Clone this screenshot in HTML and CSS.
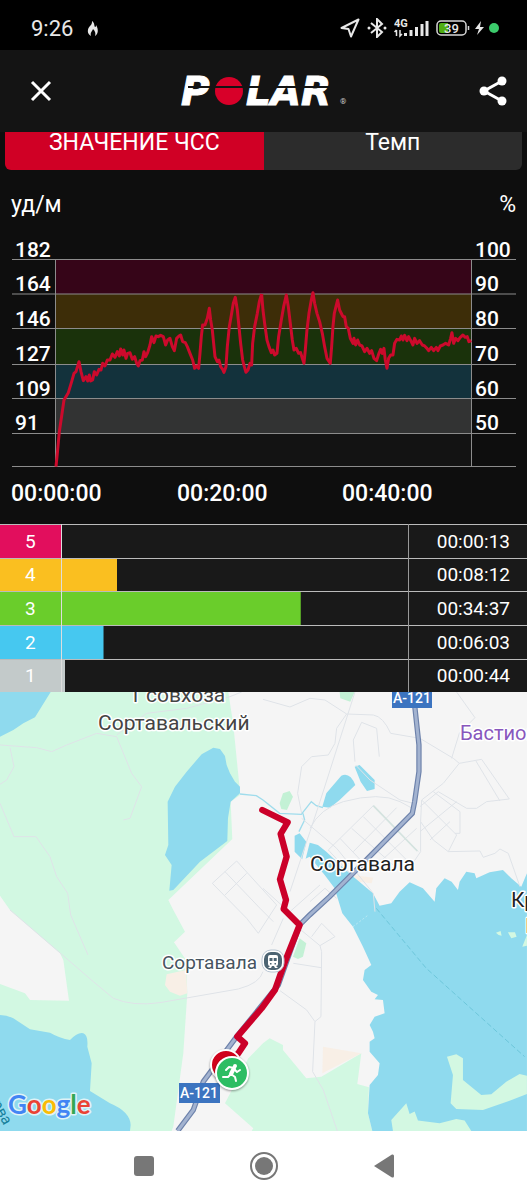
FILE: index.html
```
<!DOCTYPE html>
<html lang="ru">
<head>
    <meta charset="UTF-8">
    <meta name="viewport" content="width=device-width, initial-scale=1.0">
    <title>Polar</title>
    <link rel="stylesheet" href="styles.css">
</head>
<body>
    <div class="statusBar">
        <span class="clock">9:26</span>
        <svg class="flame" width="12" height="17" viewBox="0 0 12 17"><path d="M5 1C8 3 7 6 8 7C9 7 9 6 9 5C12 10 11 14 8 16C9 13 8 11 6 9C5 12 3 12 4 16C0 14 0 9 3 6C5 4 5 3 5 1Z" fill="#e8e8e8"/></svg>
        <div class="statusIcons">
            <svg width="20" height="20" viewBox="0 0 20 20"><path d="M1.500 10L18.500 1.500L11 18.500L8.500 11Z" fill="none" stroke="#e8e8e8" stroke-width="2" stroke-linejoin="round"/></svg>
            <svg width="20" height="20" viewBox="0 0 20 20"><path d="M4 5L15 14L10 19V1L15 6L4 15" fill="none" stroke="#e8e8e8" stroke-width="2"/><circle cx="2" cy="10" r="1.500" fill="#e8e8e8"/><circle cx="18" cy="10" r="1.500" fill="#e8e8e8"/></svg>
            <svg width="35" height="20" viewBox="0 0 35 20">
                <text x="0" y="9" class="netText">4G</text>
                <path d="M2.500 18V12M0.500 14L2.500 12M6 12V18L8 16" stroke="#e8e8e8" stroke-width="1.500" fill="none"/>
                <path d="M11.500 18V15M17 18V12M22.500 18V9M28 18V6M33 18V3" stroke="#e8e8e8" stroke-width="3"/>
            </svg>
            <svg width="34" height="18" viewBox="0 0 34 18">
                <rect x="1" y="2" width="29" height="14" rx="4" fill="none" stroke="#d8d8d8" stroke-width="1.500"/>
                <path d="M5 4H12V14H5Q3 14 3 12V6Q3 4 5 4Z" fill="#4fae12"/>
                <path d="M32.500 7V11" stroke="#d8d8d8" stroke-width="1.500"/>
                <text x="8" y="14" class="batteryText">39</text>
            </svg>
            <svg width="9" height="14" viewBox="0 0 9 14"><path d="M6 0L0 8H4L2 14L9 6H5Z" fill="#e8e8e8"/></svg>
            <svg width="10" height="10" viewBox="0 0 10 10"><circle cx="5" cy="5" r="5" fill="#3ccb6c"/></svg>
        </div>
    </div>

    <header class="header">
        <button class="iconBtn" aria-label="Закрыть">
            <svg width="22" height="22" viewBox="0 0 22 22"><path d="M2 2L20 20M20 2L2 20" stroke="#fff" stroke-width="3"/></svg>
        </button>
        <svg class="logo" width="168" height="32" viewBox="0 0 168 32">
            <text x="1" y="30" class="logoText">P</text>
            <circle cx="49" cy="16" r="14" fill="#d80029"/>
            <text x="66" y="30" class="logoText">LAR</text>
            <path d="M8 12H160" stroke="#141414" stroke-width="2"/>
            <text x="160" y="29" class="regMark">®</text>
        </svg>
        <button class="iconBtn share" aria-label="Поделиться">
            <svg width="28" height="30" viewBox="0 0 28 30"><path d="M23 5L5 15L23 25" fill="none" stroke="#fff" stroke-width="3"/><circle cx="23" cy="5" r="4.500" fill="#fff"/><circle cx="5" cy="15" r="4.500" fill="#fff"/><circle cx="23" cy="25" r="4.500" fill="#fff"/></svg>
        </button>
    </header>

    <main>
        <div class="tabs">
            <button class="tab active">ЗНАЧЕНИЕ ЧСС</button>
            <button class="tab">Темп</button>
        </div>

        <div class="units">
            <span>уд/м</span>
            <span>%</span>
        </div>

        <svg class="chart" viewBox="0 230 527 294">
            <!-- heart rate zones -->
            <rect x="56" y="260" width="415" height="34" fill="#360518"/>
            <rect x="56" y="294" width="415" height="35" fill="#3d2d08"/>
            <rect x="56" y="329" width="415" height="35" fill="#1a320b"/>
            <rect x="56" y="364" width="415" height="35" fill="#13323c"/>
            <rect x="56" y="399" width="415" height="34" fill="#323333"/>
            <rect x="56" y="433" width="415" height="33" fill="#131313"/>
            <path class="gridLine" d="M12 259.500H516M12 294H516M12 328.500H516M12 364.500H516M12 398.500H516M12 433.500H516M12 466.500H516M55.500 260V466M471.500 260V466"/>
            <g transform="translate(0 310) scale(.3333)" class="curve">
                <polyline points="168,470 172,430 178,365 184,325 192,270 205,248 215,215 222,190 228,185 237,155 243,185 250,212 258,200 263,213 268,195 272,213 278,210 283,185 290,195 297,178 303,180 308,160 315,168 322,150 330,150 337,132 345,142 352,125 358,138 362,117 368,135 372,120 378,145 383,130 390,128 397,148 404,140 410,160 415,168 420,152 427,150 432,125 437,140 443,128 450,105 455,80 462,98 468,78 475,80 482,76 490,80 497,105 503,90 510,85 517,110 523,122 530,85 537,78 542,75 548,95 556,98 562,110 570,130 578,150 584,175 590,168 596,175 600,130 604,80 608,45 615,45 622,25 628,-5 632,30 637,60 641,100 645,140 652,155 657,150 662,170 668,178 672,187 678,170 682,110 688,50 695,10 700,-20 706,-38 712,0 716,40 722,100 728,150 733,170 738,187 744,180 750,160 755,165 758,100 764,50 772,10 778,-25 785,-48"/>
                <polyline transform="translate(789 0)" points="-4,-48 0,0 5,40 12,90 18,110 25,128 30,120 35,135 42,130 47,80 55,30 62,-10 70,-45 76,-10 82,40 88,90 93,120 100,115 107,130 113,128 118,145 123,160 127,120 132,60 138,10 145,-30 150,-52 155,-20 162,10 170,35 178,70 185,110 192,145 202,160 206,110 210,50 214,10 219,-10 224,-30 230,0 236,12 240,20 245,20 250,50 256,55 262,85 270,100 273,85 278,105 284,90 290,105 297,108 305,125 312,115 320,130 326,122 333,145 341,152 348,130 353,118 358,130 363,115 367,150 372,175 377,145 383,135 390,135 395,100 402,88 410,90 415,78 420,90 425,76 432,92 437,80 445,95 450,105 455,85 462,100 470,92 478,105 485,108 492,115 497,122 505,112 512,122 520,112 525,122 532,108 540,105 548,100 557,105 563,85 567,68 572,100 578,85 585,92 592,82 600,75 607,82 613,80 618,95 625,92"/>
            </g>
            <g class="axisText">
                <text x="15" y="257">182</text>
                <text x="15" y="291">164</text>
                <text x="15" y="326">146</text>
                <text x="15" y="361">127</text>
                <text x="15" y="396">109</text>
                <text x="15" y="430">91</text>
                <text x="475" y="257">100</text>
                <text x="475" y="291">90</text>
                <text x="475" y="326">80</text>
                <text x="475" y="361">70</text>
                <text x="475" y="396">60</text>
                <text x="475" y="430">50</text>
            </g>
            <g class="axisText timeAxis">
                <text x="11" y="501">00:00:00</text>
                <text x="177" y="501">00:20:00</text>
                <text x="342" y="501">00:40:00</text>
            </g>
        </svg>

        <table class="zones">
            <tr class="zone5"><th scope="row">5</th><td class="bar" style="background-size: 0% 100%"></td><td class="time">00:00:13</td></tr>
            <tr class="zone4"><th scope="row">4</th><td class="bar" style="background-size: 16% 100%"></td><td class="time">00:08:12</td></tr>
            <tr class="zone3"><th scope="row">3</th><td class="bar" style="background-size: 69% 100%"></td><td class="time">00:34:37</td></tr>
            <tr class="zone2"><th scope="row">2</th><td class="bar" style="background-size: 12% 100%"></td><td class="time">00:06:03</td></tr>
            <tr class="zone1"><th scope="row">1</th><td class="bar" style="background-size: 1% 100%"></td><td class="time">00:00:44</td></tr>
        </table>

        <svg class="map" viewBox="0 0 527 439">
            <g transform="scale(.3333) translate(0 -21)">
                <!-- forest -->
                <path class="forest" d="M0 21H685L700 120L718 300L720 330L692 350L697 462L505 645L520 675L555 740L522 772L558 825L562 925L550 1105L520 1325L515 1338H0V897L75 925L90 945L207 947L190 825L180 805L30 675L0 632Z"/>
                <path class="forest" d="M675 1255L745 1120L789 1075L809 1060L849 1080V1095L919 1180L964 1175L1084 1105L1072 1197L1107 1207L1104 1285L1117 1338H755L760 1330Z"/>
                <path class="park" d="M839 355L849 325L869 318L879 335L861 375L844 372ZM1019 21H1064L1051 50L1021 40ZM899 760L919 775L909 815L894 822L879 815Z"/>
                <path class="sand" d="M500 868L558 855L562 925L540 932L510 920L495 900ZM969 1085L1084 1105L967 1165ZM1060 570L1120 578L1115 595L1075 590Z"/>
                <!-- water -->
                <g class="water">
                    <path d="M0 21H152L105 97L70 115L40 135L0 155Z"/>
                    <path d="M640 188L660 192L675 213L680 240L690 265L705 290L720 305V325L692 350L684 400L682 468L600 530L520 615L508 617L515 540L495 510L505 480L503 350L525 305L560 260L605 208Z"/>
                    <path d="M0 990Q20 990 40 1000L90 1033L150 1043Q180 1060 210 1065Q235 1040 250 1045Q265 1050 262 1085L275 1135L270 1218L330 1255Q390 1280 392 1320L390 1338H0Z"/>
                    <path d="M967 365L979 325L1024 272Q1050 260 1066 300L1019 345L990 368ZM1064 245L1079 240L1094 255L1124 285V312L1101 318L1082 290Z"/>
                    <path d="M884 452L899 445L919 470L954 480L979 500L1054 570L1119 625L1139 662L1174 655L1199 620L1229 592L1269 610L1304 650L1309 610L1334 580L1355 590L1374 615L1379 590L1399 560L1424 565L1429 580L1469 562L1509 555L1534 580L1564 605L1581 565V1338H1117L1104 1285L1109 1200L1134 1170L1139 1135L1109 1100V1070L1124 1060L1119 1040L1109 1020L1124 995L1154 985L1149 945L1124 943L1134 930L1114 920L1089 885L1094 855L1114 840L1089 785L1059 725L1027 685L1004 610L974 570L929 515L909 525L884 500Z"/>
                </g>
                <path d="M926 465L910 530" stroke="#f5f5f5" stroke-width="10"/>
                <path d="M720 327L769 332L789 345L839 385L904 388L934 350L949 362L969 368M909 385L914 405L897 440" class="stream"/>
                <!-- islands -->
                <path class="island" d="M1341 1115L1369 1108L1389 1120V1185L1444 1230L1474 1228L1519 1190L1559 1167L1581 1172V1227L1529 1247L1449 1275L1369 1272L1352 1255L1359 1170ZM1174 1305L1219 1255L1229 1287L1244 1280L1254 1307L1319 1315L1369 1302L1394 1307L1414 1338H1179ZM1488 743L1502 738L1505 752L1496 750ZM1524 742L1545 742L1550 755L1534 760ZM1581 750L1567 785L1581 782Z"/>
                <path d="M1129 670L1279 850L1574 1115" class="ferry"/>
                <path d="M1059 725L1105 690" stroke="#cdeff5" stroke-width="2" stroke-dasharray="6 6" fill="none"/>
                <!-- small roads -->
                <g class="road">
                    <path d="M0 180L110 188L155 200L200 180L290 145L350 155L395 265L425 305L390 400L370 405M30 188L42 245L20 285L0 298M0 355L42 455H108L150 515L170 575L203 625L212 690L264 810M350 150L440 85L560 70L690 35L725 21"/>
                    <path d="M30 675L170 795L280 890L340 940Q400 965 480 953L715 912Q780 895 789 860"/>
                    <path d="M789 43L870 66L930 40L975 45L1040 87L1120 90Q1150 95 1172 145L1260 160L1360 220L1378 235L1445 223L1528 342L1460 350L1430 370H1400L1315 320L1260 365M1040 87L1010 130L1005 175L985 210L935 215L905 245L893 325L905 385M1378 235L1330 295L1265 345L1262 410L1300 465L1345 500L1440 498L1450 517L1485 505L1500 492L1525 505L1560 605M1428 228L1500 348M1370 21L1425 98L1378 145L1355 220M1065 230L1060 165L1085 112L1130 130L1138 215M1067 240L1110 285L1200 345L1240 355"/>
                    <path d="M1065 21L960 350L930 440L870 620"/>
                    <path d="M930 430Q960 370 1030 350Q1140 320 1200 350L1237 370M1120 362L985 495L1055 570M1120 362L1255 500M1090 395L1220 525M1055 430L1180 540M1020 460L1110 555M1190 368L1060 500M1220 400L1100 520M1250 430L1130 540M1262 410V500L1235 540M1265 345L1370 450L1345 500M1300 320L1380 380V445H1365M1260 440L1370 350M1290 465L1350 410M905 400L1010 490L1120 625L1125 680"/>
                    <path d="M710 528L637 595L740 700L775 745L830 660L710 528M675 560L780 670L820 710M740 565L675 630M789 610L850 665M960 600L870 680M930 650L975 610L1010 640M935 755L965 715L1005 755L960 782L903 735M960 782L965 800L963 995L945 1010L920 975L840 917M880 835L963 848M945 1010L938 1160L970 1215L1012 1338M850 700L815 780"/>
                </g>
                <path d="M1120 362L1252 498" stroke="#d4e3df" stroke-width="5" fill="none"/>
                <!-- highway A-121 -->
                <path d="M1244 60L1257 180V260L1244 350L1237 385L1099 525L1049 575L989 635L929 690L899 720L835 900L710 1055L610 1190L580 1275L533 1338" class="hwEdge"/>
                <path d="M1244 60L1257 180V260L1244 350L1237 385L1099 525L1049 575L989 635L929 690L899 720L835 900L710 1055L610 1190L580 1275L533 1338" class="hwFill"/>
                <path d="M787 375L863 412L842 447L860 515L840 583L858 645L851 672L899 720L855 830L825 915L785 970L712 1055L735 1075L715 1105L690 1130" class="route"/>
            </g>

            <g class="mapLabel">
                <text x="129" y="10">1 совхоза</text>
                <text x="98" y="38">Сортавальский</text>
                <text x="460" y="48" class="place">Бастион</text>
                <text x="511" y="215" class="city">Кр</text>
                <text x="525" y="241" class="city">П</text>
                <text x="310" y="179" class="city">Сортавала</text>
                <text x="162" y="277" class="station">Сортавала</text>
                <text x="-12" y="404" class="river" transform="rotate(62 -12 404)">орва</text>
                <text x="8" y="422" class="google"><tspan fill="#4285f4">G</tspan><tspan fill="#ea4335">o</tspan><tspan fill="#fbbc05">o</tspan><tspan fill="#4285f4">g</tspan><tspan fill="#34a853">l</tspan><tspan fill="#ea4335">e</tspan></text>
            </g>

            <g class="shield">
                <rect x="392" y="-4" width="40" height="20"/>
                <text x="412" y="11">А-121</text>
                <rect x="179" y="391" width="41" height="20"/>
                <text x="199" y="406">А-121</text>
            </g>

            <g>
                <rect x="262" y="258" width="22" height="22" rx="9" fill="#fff" stroke="#b9c6d3"/>
                <rect x="264" y="260" width="18" height="18" rx="7" fill="#4c6473"/>
                <path d="M270 263H276Q278 263 278 265V272Q278 274 276 274L278 276H275L274 274H272L271 276H268L270 274Q268 274 268 272V265Q268 263 270 263Z" fill="#fff"/>
                <path d="M269.500 266H272.500V269H269.500ZM273.700 266H276.700V269H273.700ZM270 271H271.500V272.500H270ZM274.500 271H276V272.500H274.500Z" fill="#4c6473"/>
            </g>

            <g class="marker">
                <circle cx="226" cy="373" r="15" fill="#d0021b"/>
                <path d="M219 371Q225 364 233 370" stroke="#fff" stroke-width="1.500" fill="none"/>
                <circle cx="232" cy="381" r="16" fill="#2dbd63"/>
            </g>
            <circle cx="235" cy="374" r="2" fill="#fff"/>
            <path d="M234 376L231 382" stroke="#fff" stroke-width="4" stroke-linecap="round"/>
            <path d="M234 376L229 375L226 378M234 377L237 380L240 378M231 382L228 385L223 385M231 382L235 385L236 389" fill="none" stroke="#fff" stroke-width="2" stroke-linecap="round" stroke-linejoin="round"/>
        </svg>
    </main>

    <nav class="navBar">
        <button class="navBtn" aria-label="Недавние"><svg width="22" height="22" viewBox="0 0 22 22"><rect x="1" y="1" width="20" height="20" rx="3" fill="#777"/></svg></button>
        <button class="navBtn" aria-label="Домой"><svg width="30" height="30" viewBox="0 0 30 30"><circle cx="15" cy="15" r="13" fill="none" stroke="#777" stroke-width="2"/><circle cx="15" cy="15" r="9" fill="#777"/></svg></button>
        <button class="navBtn" aria-label="Назад"><svg width="20" height="24" viewBox="0 0 20 24"><path d="M0 12L18 0.500Q20 0 20 2V22Q20 24 18 23.500Z" fill="#777"/></svg></button>
    </nav>
</body>
</html>
```
FILE: styles.css
```
*{
    box-sizing: border-box;
}
body{
    margin: 0;
    background-color: #0e0e0e;
    color: #fff;
    font-family: Roboto, "Noto Sans", sans-serif;
}
button{
    border: none;
    padding: 0;
    background: none;
    color: inherit;
    font-family: inherit;
    cursor: pointer;
}
svg{
    display: block;
}
.statusBar{
    display: flex;
    align-items: center;
    height: 50px;
    padding: 6px 28px 0 31px;
    background-color: #000;
    color: #e8e8e8;
}
.clock{
    font-size: 22px;
}
.flame{
    margin-left: 14px;
}
.statusIcons{
    display: flex;
    align-items: center;
    gap: 7px;
    margin-left: auto;
}
.statusIcons svg:nth-last-child(-n+2){
    margin-left: -2px;
}
.netText{
    font-size: 11px;
    font-weight: 700;
    fill: #e8e8e8;
}
.batteryText{
    font-size: 13px;
    font-weight: 500;
    fill: #e8e8e8;
}
.header{
    display: grid;
    grid-template-columns: 1fr auto 1fr;
    align-items: center;
    height: 82px;
    padding: 0 20px;
    background-color: #141414;
}
.iconBtn{
    justify-self: start;
    padding: 0 10px;
}
.share{
    justify-self: end;
    padding: 0;
}
.logo{
    overflow: visible;
}
.logoText{
    font-family: "DejaVu Sans", sans-serif;
    font-size: 39px;
    font-weight: 700;
    font-style: italic;
    fill: #fff;
    stroke: #fff;
    stroke-width: 1;
}
.regMark{
    font-size: 8px;
    fill: #ccc;
}
.tabs{
    display: flex;
    align-items: flex-end;
    height: 38px;
    margin: 0 5px;
    overflow: hidden;
}
.tab{
    flex: 1;
    height: 56px;
    background-color: #2c2c2c;
    font-size: 23px;
    border-radius: 0 6px 6px 0;
}
.tab.active{
    background-color: #d00025;
    border-radius: 6px 0 0 6px;
}
.units{
    display: flex;
    justify-content: space-between;
    height: 60px;
    padding: 0 11px;
    font-size: 23px;
    line-height: 70px;
}
.chart, .map{
    width: 100%;
    height: auto;
}
.gridLine{
    stroke: #8c8c8c;
    fill: none;
}
.curve{
    fill: none;
    stroke: #cc0a2c;
    stroke-width: 9;
    stroke-linejoin: round;
}
.axisText{
    font-size: 21px;
    font-weight: 500;
    fill: #fff;
}
.timeAxis{
    font-size: 23px;
}
.zones{
    width: 100%;
    height: 168px;
    border-collapse: collapse;
    table-layout: fixed;
    background-color: #191919;
    font-size: 19px;
}
.zones tr{
    border-top: 1px solid #bbb;
}
.zones th, .zones td{
    padding: 0;
}
.zones th{
    width: 61px;
    border-right: 1px solid #ddd;
    font-weight: 400;
}
.zones .time{
    width: 119px;
    padding-right: 17px;
    border-left: 1px solid #999;
    text-align: right;
}
.bar{
    background-repeat: no-repeat;
}
.zone5 th{
    background-color: #e20e5d;
}
.zone5 .bar{
    background-image: linear-gradient(#e20e5d, #e20e5d);
}
.zone4 th{
    background-color: #fabf20;
}
.zone4 .bar{
    background-image: linear-gradient(#fabf20, #fabf20);
}
.zone3 th{
    background-color: #6acd2b;
}
.zone3 .bar{
    background-image: linear-gradient(#6acd2b, #6acd2b);
}
.zone2 th{
    background-color: #46c8f0;
}
.zone2 .bar{
    background-image: linear-gradient(#46c8f0, #46c8f0);
}
.zone1 th{
    background-color: #c3caca;
}
.zone1 .bar{
    background-image: linear-gradient(#c3caca, #c3caca);
}
.map{
    background-color: #f5f5f5;
}
.forest{
    fill: #d2f8e2;
}
.park{
    fill: #c3f1d5;
}
.island{
    fill: #d3f8e2;
}
.sand{
    fill: #f8efe6;
}
.water{
    fill: #8fdaee;
}
.stream{
    fill: none;
    stroke: #9fdcec;
    stroke-width: 4;
}
.ferry{
    fill: none;
    stroke: #6cc6da;
    stroke-width: 3;
    stroke-dasharray: 16 8;
}
.road{
    fill: none;
    stroke: #dfe3e8;
    stroke-width: 3;
}
.hwEdge{
    fill: none;
    stroke: #6d82ab;
    stroke-width: 16;
}
.hwFill{
    fill: none;
    stroke: #a3b3d0;
    stroke-width: 9;
}
.route{
    fill: none;
    stroke: #cb0029;
    stroke-width: 19;
    stroke-linejoin: round;
    stroke-linecap: round;
}
.mapLabel{
    font-size: 21px;
    fill: #444;
    stroke: #fff;
    stroke-width: 3;
    stroke-linejoin: round;
    paint-order: stroke;
}
.mapLabel .city{
    fill: #222;
}
.mapLabel .station{
    font-size: 19px;
    fill: #47545f;
}
.mapLabel .place{
    font-size: 20px;
    fill: #8857bd;
}
.mapLabel .river{
    font-size: 15px;
    fill: #16809a;
    stroke: none;
}
.mapLabel .google{
    font-family: Lato, sans-serif;
    font-size: 26px;
    font-weight: 700;
    stroke: #dff3f7;
}
.shield{
    font-size: 14px;
    font-weight: 500;
    text-anchor: middle;
    fill: #fff;
}
.shield rect{
    fill: #3c74c0;
}
.marker circle{
    stroke: #fff;
    stroke-width: 2;
    filter: drop-shadow(0 1px 1px rgba(0, 0, 0, 0.4));
}
.navBar{
    display: flex;
    justify-content: center;
    align-items: center;
    gap: 80px;
    height: 69px;
    background-color: #fff;
}
.navBtn{
    display: flex;
    justify-content: center;
    width: 40px;
}
```
